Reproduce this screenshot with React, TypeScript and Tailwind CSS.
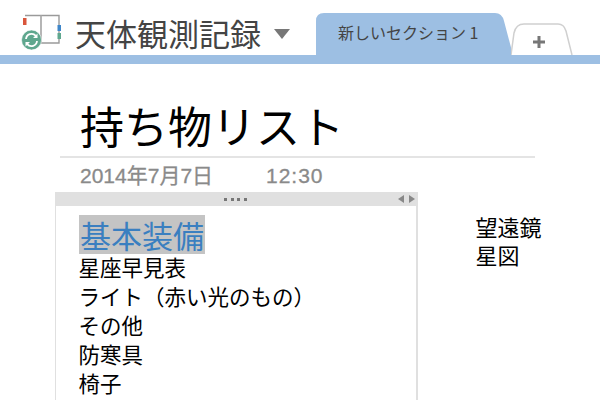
const cjk = 'font-["Noto_Sans_CJK_JP","Liberation_Sans",sans-serif]'

function NotebookIcon() {
  return (
    <svg width="44" height="44" viewBox="0 0 44 44" className="shrink-0">
      <path d="M5 5.500H21V33H10M21 5.500H39V33H21" fill="none" stroke="#9a9a9a" strokeWidth="1.400" />
      <path d="M21 5.500V33" stroke="#b5b5b5" strokeWidth="1.200" />
      <rect x="3" y="8" width="3.500" height="7" fill="#d9563c" />
      <rect x="37.500" y="15" width="3.500" height="6" fill="#3f86c9" />
      <rect x="37.500" y="23" width="3.500" height="6" fill="#5fa78e" />
      <circle cx="11.500" cy="30" r="10" fill="#5fa78e" stroke="#ffffff" strokeWidth="0.600" />
      <path d="M6 29a5.600 5.600 0 0 1 9.800-3.200M17 31a5.600 5.600 0 0 1-9.800 3.200" fill="none" stroke="#ffffff" strokeWidth="1.800" />
      <path d="M17.500 23.500v4.500h-4.500zM5.500 36.500v-4.500h4.500z" fill="#ffffff" />
    </svg>
  )
}

function ActiveTab() {
  return (
    <div className="relative w-[197px] h-[43px] shrink-0 flex items-center pl-[22px] pb-[4px]">
      <svg width="197" height="43" viewBox="0 0 197 43" className="absolute inset-0">
        <path d="M0 43V9Q0 1 8 1H179Q186 1 188 9L197 43Z" fill="#9dbfe3" />
      </svg>
      <span className="relative text-[16px] leading-none text-[#444] whitespace-nowrap">新しいセクション 1</span>
    </div>
  )
}

function AddTab() {
  return (
    <div className="relative w-[62px] h-[32px] shrink-0 ml-[-2px] flex items-center justify-center">
      <svg width="62" height="32" viewBox="0 0 62 32" className="absolute inset-0">
        <path d="M0 32L3 10Q5 1 13 1H47Q53 1 55 8L61 32" fill="#fff" stroke="#d0d0d0" strokeWidth="1.500" />
      </svg>
      <svg width="14" height="14" viewBox="0 0 14 14" className="relative mt-[5px] mr-[6px]">
        <path d="M7 1V13M1 7H13" stroke="#777" strokeWidth="3" />
      </svg>
    </div>
  )
}

function NoteBar() {
  return (
    <div className="h-[14px] bg-[#e0e0e0] relative flex items-center justify-center">
      <div className="flex gap-[3.500px] ml-[-1px]">
        <span className="w-[3px] h-[3px] bg-[#777]" />
        <span className="w-[3px] h-[3px] bg-[#777]" />
        <span className="w-[3px] h-[3px] bg-[#777]" />
        <span className="w-[3px] h-[3px] bg-[#777]" />
      </div>
      <div className="absolute right-[1px] top-[3px] flex gap-[5px]">
        <svg width="6" height="8" viewBox="0 0 6 8"><path d="M6 0V8L0 4Z" fill="#888" /></svg>
        <svg width="6" height="8" viewBox="0 0 6 8"><path d="M0 0V8L6 4Z" fill="#888" /></svg>
      </div>
    </div>
  )
}

export default function App() {
  const items = ['星座早見表', 'ライト（赤い光のもの）', 'その他', '防寒具', '椅子']
  return (
    <div className={`w-[600px] h-[400px] overflow-hidden bg-white ${cjk}`}>
      <div className="h-[55px] flex items-end">
        <div className="w-[316px] h-full flex items-center pl-[20px] pt-[9px]">
          <NotebookIcon />
          <span className="ml-[11px] text-[31px] leading-none text-[#444] whitespace-nowrap">天体観測記録</span>
          <svg width="16" height="10" viewBox="0 0 16 10" className="ml-[13px] mt-[3px]"><path d="M0 0H16L8 10Z" fill="#777" /></svg>
        </div>
        <ActiveTab />
        <AddTab />
      </div>
      <div className="h-[9px] bg-[#9dbfe3]" />

      <div className="pl-[60px] w-[535px]">
        <div className="h-[94px] border-b-2 border-[#e4e4e4] pl-[20px] pt-[31px]">
          <div className="text-[44px] leading-[60px] text-black whitespace-nowrap">持ち物リスト</div>
        </div>
        <div className="h-[34px] flex items-center pl-[20px] pt-[1px] font-['Liberation_Sans','Noto_Sans_CJK_JP',sans-serif] text-[#8a8a8a] text-[21px] [-webkit-text-stroke:0.3px_#8a8a8a]">
          <span className="w-[186px]">2014年7月7日</span>
          <span className="tracking-[1px]">12:30</span>
        </div>
      </div>

      <div className="flex pl-[55px]">
        <div className="w-[363px] h-[300px] shrink-0 border-x-2 border-[#e0e0e0] border-l-[1.500px]">
          <NoteBar />
          <div className="pl-[23px] pt-[9px]">
            <div className="inline-block bg-[#c4c4c4] text-[#3a7fc0] text-[31px] leading-[39px] px-[1px]">基本装備</div>
            <div className="mt-[-2px] ml-[-0.500px]">
              {items.map(item => (
                <div key={item} className="text-[21.500px] leading-[29px] text-black whitespace-nowrap">{item}</div>
              ))}
            </div>
          </div>
        </div>
        <div className="pl-[57.500px] pt-[20px] text-[22px] leading-[28px] text-black">
          <div>望遠鏡</div>
          <div>星図</div>
        </div>
      </div>
    </div>
  )
}
